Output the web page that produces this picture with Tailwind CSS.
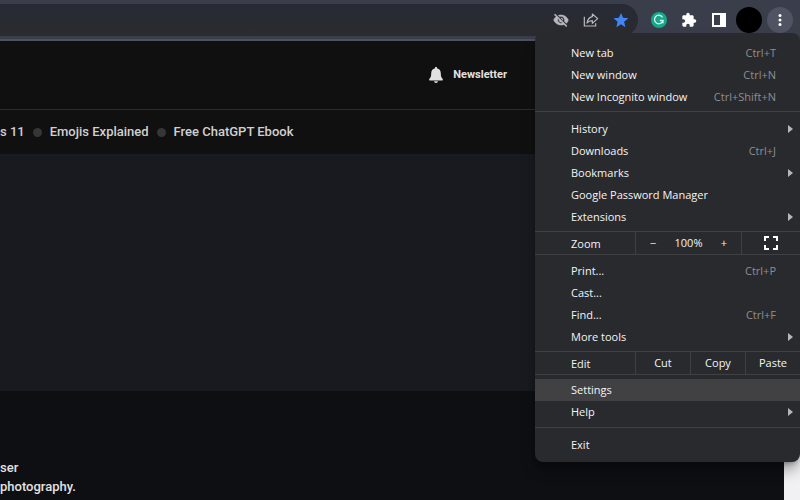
<!DOCTYPE html>
<html lang="en">
<head>
  <meta charset="UTF-8">
  <meta name="viewport" content="width=device-width, initial-scale=1.0">
  <title>Browser Menu</title>
  <script src="https://cdn.jsdelivr.net/npm/@tailwindcss/browser@4"></script>
</head>
<body class="relative h-screen overflow-hidden flex flex-col bg-[#0e0f13] font-['Roboto',sans-serif]">

  <!-- toolbar -->
  <header class="flex items-center h-[41px] shrink-0 bg-[#3a3d4a] border-b-2 border-[#4f5060] pr-[7px]">
    <div class="flex-1 flex items-center justify-end gap-3 h-8 pr-2 rounded-r-full bg-linear-to-b from-[#272a35] to-[#2b2b2e] text-[#b9babf]">
      <button aria-label="Third-party cookies blocked" class="w-[18px]">
        <svg class="size-4 mx-auto" viewBox="0 0 24 24" fill="currentColor"><path d="M12 6.500a5.500 5.500 0 0 1 5.100 7.500l3 3c1.300-1.200 2.300-2.900 2.900-5C21.300 7.600 17 4.500 12 4.500c-1.400 0-2.700.2-4 .7l2 1.700c.6-.3 1.300-.4 2-.4zM2 4.300l2.700 2.700C3 8.300 1.700 10 1 12c1.700 4.400 6 7.500 11 7.500 1.500 0 3-.3 4.400-.8l3.300 3.300 1.300-1.300L3.300 3 2 4.300zM7.500 9.800l1.600 1.600a3 3 0 0 0 3.500 3.500l1.600 1.600A5 5 0 0 1 7.500 9.800zM11.800 9l3.200 3.200V12a3 3 0 0 0-3.200-3z" stroke="currentColor" stroke-width=".8"/></svg>
      </button>
      <button aria-label="Share this page" class="w-[18px]">
        <svg class="size-4 mx-auto" viewBox="0 0 24 24" fill="none" stroke="currentColor" stroke-width="1.800"><path d="M2 7v14h17v-4"/><path d="M14 3l8 7-8 7v-4c-3.500 0-6 1-8 3.500.8-5 3.500-8.500 8-9.500z" stroke-linejoin="round"/></svg>
      </button>
      <button aria-label="Bookmarked" class="w-[18px] text-[#4285f4]">
        <svg class="size-[18px]" viewBox="0 0 24 24" fill="currentColor"><path d="M12 17.770 17.800 21.500l-1.640-7.030L22 9.740l-7.190-.61L12 2.500 9.190 9.130 2 9.740l5.460 4.730L5.820 21.500z"/></svg>
      </button>
    </div>
    <div class="flex items-center ml-3 text-white">
      <button aria-label="Grammarly" class="w-[18px]">
        <svg class="size-[18px]" viewBox="0 0 18 18"><circle cx="9" cy="9" r="8" fill="#15a88b"/><path d="M12.500 6.300A4.300 4.300 0 1 0 13 9.500H9.800M13 9.500v2.700" fill="none" stroke="#d8f5ee" stroke-width="1.300"/></svg>
      </button>
      <button aria-label="Extensions" class="w-4 ml-[13px]">
        <svg class="size-4" viewBox="0 0 24 24" fill="currentColor"><path d="M20.500 11H19V7c0-1.100-.9-2-2-2h-4V3.500a2.500 2.500 0 0 0-5 0V5H4c-1.100 0-2 .9-2 2v3.800h1.500a2.700 2.700 0 0 1 0 5.400H2V20c0 1.100.9 2 2 2h3.800v-1.500a2.700 2.700 0 0 1 5.400 0V22H17c1.100 0 2-.9 2-2v-4h1.500a2.500 2.500 0 0 0 0-5z"/></svg>
      </button>
      <button aria-label="Side panel" class="w-4 ml-[14px]">
        <svg class="size-4" viewBox="0 0 16 16"><path d="M1 1h14v14H1z" fill="#fff"/><path d="M3 3h6v10H3z" fill="#3a3d4a"/></svg>
      </button>
      <button aria-label="Profile" class="size-[26px] ml-[9px] rounded-full bg-black"></button>
      <button aria-label="Menu" class="size-[26px] ml-[5px] rounded-full bg-[#505361] flex items-center justify-center">
        <svg class="w-1 h-3" viewBox="0 0 4 12" fill="#fff"><circle cx="2" cy="1.500" r="1.500"/><circle cx="2" cy="6" r="1.500"/><circle cx="2" cy="10.500" r="1.500"/></svg>
      </button>
    </div>
  </header>

  <!-- page -->
  <div class="flex-1 flex min-h-0">
    <div class="flex-1 flex flex-col text-[#e2e2e2]">
      <div class="h-[69px] flex items-center justify-end pr-[277px] bg-[#101010] border-b border-[#2c2c2e]">
        <a href="#" class="flex items-center gap-[10px] text-[11px] font-bold">
          <svg class="w-[14px] h-4" viewBox="0 0 12 14" fill="currentColor"><path d="M6 0c.6 0 1 .4 1 1v.4c2 .4 3.200 2 3.200 4 0 2.600.5 3.900 1.500 4.800.6.600.2 1.600-.6 1.600H.9c-.8 0-1.200-1-.6-1.600 1-.9 1.500-2.200 1.500-4.800 0-2 1.200-3.600 3.200-4V1c0-.6.400-1 1-1zM4.300 12.400h3.400a1.700 1.600 0 0 1-3.400 0z"/></svg>
          Newsletter
        </a>
      </div>
      <nav class="h-11 flex items-center gap-2 bg-[#101010] text-[13px] font-medium text-[#d0d0d0] whitespace-nowrap">
        <a href="#">s 11</a>
        <span class="size-[9px] rounded-full bg-[#363636]"></span>
        <a href="#">Emojis Explained</a>
        <span class="size-[9px] rounded-full bg-[#363636]"></span>
        <a href="#">Free ChatGPT Ebook</a>
      </nav>
      <div class="h-[237px] bg-[#181a20]"></div>
      <p class="pt-[67px] text-[13px] leading-[19px] font-medium">ser<br>photography.</p>
    </div>
    <div class="w-4 bg-[#f1f1f3]"></div>
  </div>

  <!-- main menu, opened over the page -->
  <div id="menu" class="absolute right-0 top-[33px] w-[265px] pt-[9px] pb-[6px] rounded-lg bg-[#292a2d] text-[#f4f4f6] text-[11px] font-['Open_Sans',sans-serif] shadow-lg shadow-black/40 overflow-hidden">
    <div data-group="top"></div>
    <hr class="mt-[3px] mb-[6px] border-[#3f4043]">
    <div data-group="places"></div>
    <div class="mt-[3px] mb-[5px] h-6 flex border-y border-[#3f4043]">
      <span class="flex-1 pl-9 leading-6">Zoom</span>
      <div class="w-[106px] flex items-center justify-between px-[13px] border-l border-[#3f4043]">
        <button aria-label="Zoom out" class="w-2">−</button>
        <span>100%</span>
        <button aria-label="Zoom in" class="w-2">+</button>
      </div>
      <button aria-label="Full screen" class="w-[59px] flex items-center justify-center border-l border-[#3f4043]">
        <svg class="size-[14px]" viewBox="0 0 14 14" fill="none" stroke="#fff" stroke-width="2"><path d="M1 5V1h4M9 1h4v4M13 9v4H9M5 13H1V9"/></svg>
      </button>
    </div>
    <div data-group="tools"></div>
    <div class="mt-[3px] mb-1 h-6 flex border-y border-[#3f4043]">
      <span class="flex-1 pl-9 leading-6">Edit</span>
      <button class="w-[55px] border-l border-[#3f4043]">Cut</button>
      <button class="w-[55px] border-l border-[#3f4043]">Copy</button>
      <button class="w-[55px] border-l border-[#3f4043]">Paste</button>
    </div>
    <div data-group="settings"></div>
    <hr class="mt-1 mb-[6px] border-[#3f4043]">
    <div data-group="exit"></div>
  </div>

<script>
// label, shortcut, '>' marks a submenu
const groups = {
  top: [['New tab', 'Ctrl+T'], ['New window', 'Ctrl+N'], ['New Incognito window', 'Ctrl+Shift+N']],
  places: [['History', '>'], ['Downloads', 'Ctrl+J'], ['Bookmarks', '>'], ['Google Password Manager', ''], ['Extensions', '>']],
  tools: [['Print...', 'Ctrl+P'], ['Cast...', ''], ['Find...', 'Ctrl+F'], ['More tools', '>']],
  settings: [['Settings', ''], ['Help', '>']],
  exit: [['Exit', '']]
};
const arrow = '<svg class="w-[5px] h-2" viewBox="0 0 5 8" fill="#b5b6b9"><path d="M0 0l5 4-5 4z"/></svg>';

for (const name in groups) {
  const el = document.querySelector('[data-group=' + name + ']');
  groups[name].forEach(([label, key]) => {
    const sub = key === '>';
    el.insertAdjacentHTML('beforeend', `
      <button class="w-full h-[22px] flex items-center justify-between pl-9 ${sub ? 'pr-[7px]' : 'pr-6'} ${label === 'Settings' ? 'bg-[#414143]' : ''}">
        <span>${label}</span>
        ${sub ? arrow : `<span class="text-[#8d8e92]">${key}</span>`}
      </button>`);
  });
}
</script>
</body>
</html>
